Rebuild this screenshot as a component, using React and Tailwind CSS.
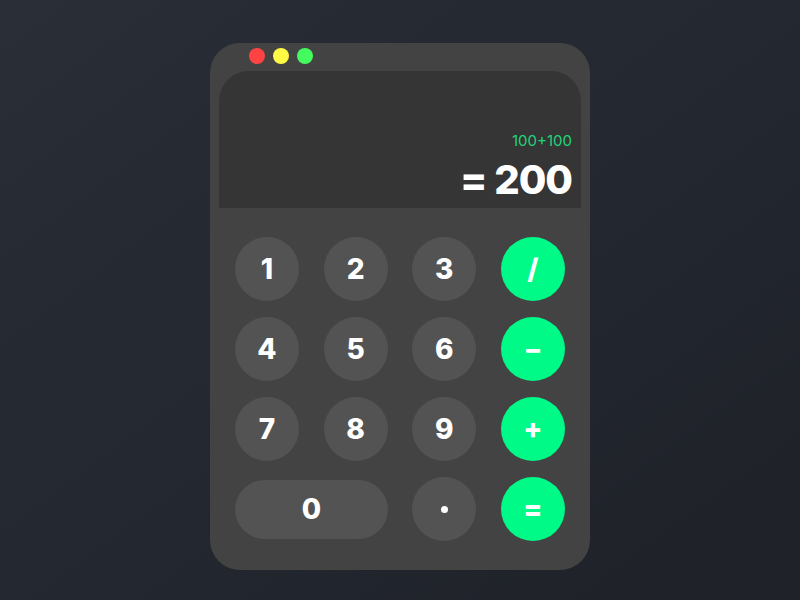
import React from "react";

const keys = [
  { label: "1" },
  { label: "2" },
  { label: "3" },
  { label: "/", op: true },
  { label: "4" },
  { label: "5" },
  { label: "6" },
  { label: "–", op: true },
  { label: "7" },
  { label: "8" },
  { label: "9" },
  { label: "+", op: true },
  { label: "0", wide: true },
  { label: ".", dot: true },
  { label: "=", op: true },
];

function Key({ label, op, wide, dot }) {
  let cls =
    "flex items-center justify-center text-white font-extrabold text-[28px] leading-none select-none ";
  if (wide) cls += "col-span-2 h-[59px] rounded-full bg-[#535353] self-center";
  else if (op) cls += "w-[64px] h-[64px] rounded-full bg-[#00fa88]";
  else cls += "w-[64px] h-[64px] rounded-full bg-[#535353]";
  return (
    <button className={cls}>
      {dot ? (
        <span className="w-[7px] h-[7px] rounded-full bg-white" />
      ) : (
        <span>{label}</span>
      )}
    </button>
  );
}

export default function App() {
  return (
    <div
      className="w-[800px] h-[600px] flex justify-center pt-[43px] bg-gradient-to-br from-[#292e37] to-[#1e2128]"
      style={{ fontFamily: "Inter, 'Open Sans', sans-serif" }}
    >
      <div className="w-[380px] h-[527px] rounded-[30px] bg-[#434343] flex flex-col">
        {/* window controls */}
        <div className="h-[28px] flex items-start gap-[8px] pt-[5px] pl-[39px]">
          <span className="w-[16px] h-[16px] rounded-full bg-[#ff4343]" />
          <span className="w-[16px] h-[16px] rounded-full bg-[#fffa44]" />
          <span className="w-[16px] h-[16px] rounded-full bg-[#44fb5f]" />
        </div>

        {/* display */}
        <div className="mx-[9px] h-[137px] rounded-t-[30px] bg-[#353535] flex flex-col items-end justify-end pr-[9px] pb-[8px]">
          <div className="text-[15px] font-normal text-[#1ed67a] leading-none mb-[12px]">
            100+100
          </div>
          <div className="text-[40px] font-extrabold text-white leading-none tracking-[-1px]">
            = 200
          </div>
        </div>

        {/* keypad */}
        <div className="grid grid-cols-[64px_64px_64px_64px] gap-x-[24.67px] gap-y-[16px] pt-[29px] px-[25px]">
          {keys.map((k) => (
            <Key key={k.label} {...k} />
          ))}
        </div>
      </div>
    </div>
  );
}
